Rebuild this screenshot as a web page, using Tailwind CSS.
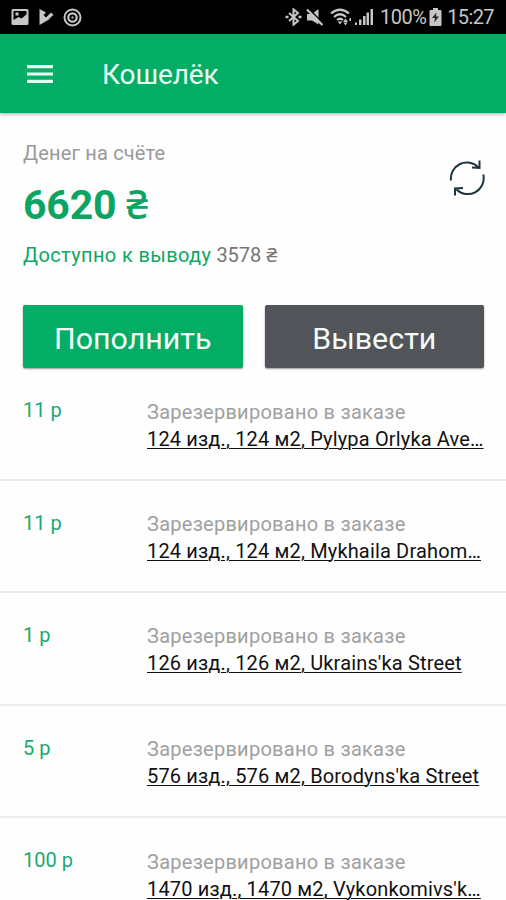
<!DOCTYPE html>
<html lang="ru">
<head>
<meta charset="utf-8">
<meta name="viewport" content="width=device-width, initial-scale=1">
<title>Кошелёк</title>
<script src="https://cdn.jsdelivr.net/npm/@tailwindcss/browser@4"></script>
</head>
<body class="bg-[#fefefe] overflow-hidden font-['Roboto','Noto_Sans',sans-serif]">
<div class="w-[506px] h-[900px] overflow-hidden flex flex-col">
  <div class="h-[34px] shrink-0 bg-black flex items-center justify-between pl-[11px] pr-[12px] text-[#c6c6c6]">
    <div class="flex items-center gap-[9px]">
      <svg class="w-[18px] h-[18px]" viewBox="0 0 18 18"><path fill="currentColor" fill-rule="evenodd" d="M2 1h14a1.500 1.500 0 0 1 1.500 1.500v13A1.500 1.500 0 0 1 16 17H2A1.500 1.500 0 0 1 .5 15.500v-13A1.500 1.500 0 0 1 2 1zM2.500 3v9l5-3 3 1.500 5-4V3zM4.500 4.500h3v3h-3z"/></svg>
      <svg class="w-[16px] h-[18px]" viewBox="0 0 16 18"><path fill="currentColor" d="M1.500 1 8 4.500 5.500 7 8 9.500 13 4.500 15.500 7 10 11.500 14.500 9.500 1.500 17z"/></svg>
      <svg class="w-[19px] h-[19px]" viewBox="0 0 19 19" fill="none" stroke="currentColor"><circle cx="9.500" cy="9.500" r="8" stroke-width="2"/><circle cx="9.500" cy="9.500" r="4.200" stroke-width="2.200"/><path d="M9.500 8.500v2" stroke-width="2"/></svg>
    </div>
    <div class="flex items-center">
      <svg class="w-[17px] h-[18px] mr-[4px]" viewBox="0 0 17 18" fill="none" stroke="currentColor" stroke-width="2"><path d="M4 5l9 8-4.500 3.700V1.300L13 5l-9 8"/><path d="M.5 9h3M13.500 9h3" stroke-width="2.400"/></svg>
      <svg class="w-[18px] h-[18px] mr-[6px]" viewBox="0 0 18 18"><path fill="currentColor" d="M1 6h5l6.500-5v15.500L6 12.500H1z"/><path d="M2.500 .5 18 16" stroke="#000" stroke-width="1.500"/><path d="M1 1.500 16.500 17" stroke="currentColor" stroke-width="2.200"/></svg>
      <svg class="w-[22px] h-[18px] mr-[3px]" viewBox="0 0 22 18" fill="none" stroke="currentColor" stroke-width="2.200"><path d="M1 5.500Q10 -2 19 5.500M4 9Q10 3.500 16 9M7 12Q10 9.500 13 12"/><path fill="currentColor" stroke="none" d="M7.800 13.500h4.500L10 16.500zM13 14l2.500-3.500L18 14zM13.500 14.500h4l-2 3zM19.500 10h1.500v3h-1.500z"/></svg>
      <svg class="w-[18px] h-[18px] mr-[7px]" viewBox="0 0 18 18" fill="currentColor"><path d="M0 14.500h2V17H0zM4 11.500h2.500V17H4zM8 8h2.500v9H8zM11.500 4.500H14V17h-2.500zM15.500 1H18v16h-2.500z" /></svg>
      <span class="text-[20px] leading-[34px] w-[44px] tracking-[-0.5px] whitespace-nowrap">100%</span>
      <svg class="w-[13px] h-[18px] mx-[5px]" viewBox="0 0 13 18"><path fill="currentColor" d="M4 0h5v2h2.500q1 0 1 1v14q0 1-1 1h-10q-1 0-1-1V3q0-1 1-1H4z"/><path fill="#222" d="M7.500 4.500 3 10h3l-.8 4.500L10 8.500H7z"/></svg>
      <span class="text-[20px] leading-[34px] tracking-[-0.6px] w-[47px] text-right whitespace-nowrap">15:27</span>
    </div>
  </div>
  <header class="h-[79px] shrink-0 bg-[#04ad65] flex items-center pl-[27px] shadow-[0_1px_4px_rgba(0,0,0,0.35)] text-[#e8fff5]">
    <svg class="w-[26px] h-[18px]" viewBox="0 0 26 18" fill="currentColor"><path d="M0 0h26v3.200H0zM0 7.400h26v3.200H0zM0 14.800h26V18H0z"/></svg>
    <h1 class="ml-[49px] pt-[2px] text-[28px] leading-[32px] tracking-[-0.1px]">Кошелёк</h1>
  </header>
  <section class="h-[192px] shrink-0 px-[21px] pt-[28px] flex justify-between">
    <div class="pl-[2px]">
      <p class="text-[20px] leading-[24px] tracking-[0.18px] text-[#999]">Денег на счёте</p>
      <p class="mt-[16px] h-[48px] text-[41px] leading-[48px] tracking-[-0.2px] font-bold text-[#0ca463]">6620 <span class="font-medium text-[39px]">₴</span></p>
      <p class="mt-[14px] text-[20px] leading-[24px] text-[#777]"><span class="text-[#12a566] tracking-[0.38px]">Доступно к выводу</span> 3578 ₴</p>
    </div>
    <svg class="w-[36px] h-[38px] mt-[18px]" viewBox="0 0 36 38" fill="none" stroke="#1d3540" stroke-width="2"><path d="M2 21.500A16 16 0 0 1 29.500 8.500M34.300 15.500A16 16 0 0 1 7.500 30.500M30.500 1.500v7.500L23 8.500M6 36.500V29.500l8-.5"/></svg>
  </section>
  <div class="h-[63px] shrink-0 pl-[23px] pr-[22px] grid grid-cols-2 gap-[22px] text-[30.400px] text-[#f4faf8]">
    <button class="bg-[#04ad65] rounded-[2px] shadow-[0_1px_2px_rgba(0,0,0,0.4)] pt-[5px]">Пополнить</button>
    <button class="bg-[#515458] rounded-[2px] shadow-[0_1px_2px_rgba(0,0,0,0.4)] pt-[5px]">Вывести</button>
  </div>
  <ul class="text-[20px]">
    <li class="h-[112.500px] pt-[30px] pl-[23px] flex border-b-2 border-[#ececec]"><span class="w-[124px] leading-[24px] text-[#1ba871]">11 р</span><div class="pt-px leading-[27px] whitespace-nowrap"><p class="text-[#a0a0a0] tracking-[0.26px]">Зарезервировано в заказе</p><a class="block text-[#111] tracking-[0.16px] underline decoration-1 underline-offset-2">124 изд., 124 м2, Pylypa Orlyka Ave…</a></div></li>
    <li class="h-[112.500px] pt-[30px] pl-[23px] flex border-b-2 border-[#ececec]"><span class="w-[124px] leading-[24px] text-[#1ba871]">11 р</span><div class="leading-[27px] whitespace-nowrap"><p class="text-[#a0a0a0] tracking-[0.26px]">Зарезервировано в заказе</p><a class="block text-[#111] tracking-[0.16px] underline decoration-1 underline-offset-2">124 изд., 124 м2, Mykhaila Drahom…</a></div></li>
    <li class="h-[112.500px] pt-[30px] pl-[23px] flex border-b-2 border-[#ececec]"><span class="w-[124px] leading-[24px] text-[#1ba871]">1 р</span><div class="leading-[27px] whitespace-nowrap"><p class="text-[#a0a0a0] tracking-[0.26px]">Зарезервировано в заказе</p><a class="block text-[#111] tracking-[0.16px] underline decoration-1 underline-offset-2">126 изд., 126 м2, Ukrains'ka Street</a></div></li>
    <li class="h-[112.500px] pt-[30px] pl-[23px] flex border-b-2 border-[#ececec]"><span class="w-[124px] leading-[24px] text-[#1ba871]">5 р</span><div class="leading-[27px] whitespace-nowrap"><p class="text-[#a0a0a0] tracking-[0.26px]">Зарезервировано в заказе</p><a class="block text-[#111] tracking-[0.16px] underline decoration-1 underline-offset-2">576 изд., 576 м2, Borodyns'ka Street</a></div></li>
    <li class="h-[112.500px] pt-[30px] pl-[23px] flex"><span class="w-[124px] leading-[24px] text-[#1ba871]">100 р</span><div class="pt-px leading-[27px] whitespace-nowrap"><p class="text-[#a0a0a0] tracking-[0.26px]">Зарезервировано в заказе</p><a class="block text-[#111] tracking-[0.16px] underline decoration-1 underline-offset-2">1470 изд., 1470 м2, Vykonkomivs'k…</a></div></li>
  </ul>
</div>
</body>
</html>
